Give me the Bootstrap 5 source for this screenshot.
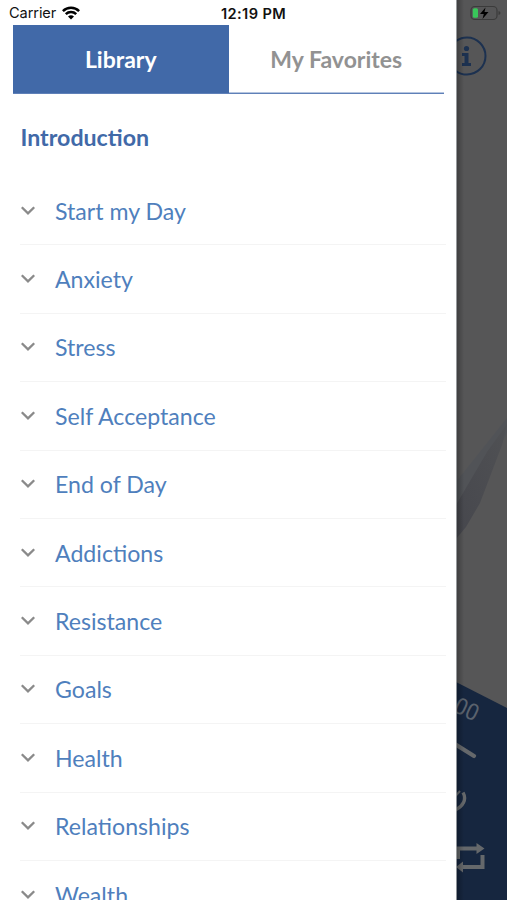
<!DOCTYPE html>
<html lang="en">
<head>
<meta charset="utf-8">
<meta name="viewport" content="width=device-width, initial-scale=1">
<title>Library</title>
<link href="https://cdn.jsdelivr.net/npm/bootstrap@5.3.0/dist/css/bootstrap.min.css" rel="stylesheet">
<style>
body{font-family:Lato,"Liberation Sans",sans-serif;}
.screen{width:507px;height:900px;}
.drawer{width:456px;}
.status{height:25px;font:500 15px/28px Inter,"Liberation Sans",sans-serif;color:#111;padding-left:9px;}
.carrier{width:212px;gap:6px;font-weight:400;font-size:14.6px;letter-spacing:-.1px;padding-top:1px}
.clock{font-weight:600;font-size:14.6px;letter-spacing:.4px}
.tabs{margin:0 12px 0 13px;height:69px;border-bottom:1px solid #5f80b8;box-shadow:inset 0 -1px #b5c5df;}
.tabs .nav-link{border-radius:0;font-size:23px;font-weight:700;line-height:68px;height:68px;padding:0;color:#929292;}
.tabs .nav-link.active{background:#4169a8;color:#fff;}
.intro{font-size:23.2px;font-weight:700;line-height:28px;color:#4169a8;margin:29px 0 0 20.5px;}
.topics{margin:26px 10px 0 20px;}
.topics .topic{height:68.4px;border:0;border-bottom:1.3px solid #f4f4f4;padding:0;color:#4f7fbd;font-size:23.15px;line-height:28px;background:none;border-radius:0}
.topic svg{margin:0 19px 0 0;}
</style>
<script src="https://cdn.jsdelivr.net/npm/bootstrap@5.3.0/dist/js/bootstrap.bundle.min.js"></script>
</head>
<body class="overflow-hidden bg-white">
<div class="screen d-flex overflow-hidden">
  <aside class="drawer flex-shrink-0 bg-white overflow-hidden">
    <div class="status d-flex">
      <div class="carrier d-flex align-items-center"><span>Carrier</span>
        <svg width="18" height="14" viewBox="0 0 18 14"><g fill="none" stroke="#000" stroke-width="2.5"><path d="M.9 5.1a11.5 11.5 0 0 1 16.2 0"/><path d="M3.8 8.2a7.4 7.4 0 0 1 10.4 0"/></g><path d="M6 10.6a4.3 4.3 0 0 1 6 0L9 13.6z"/></svg>
      </div>
      <div class="clock">12:19 PM</div>
    </div>
    <nav class="tabs nav nav-pills nav-justified flex-nowrap">
      <a class="nav-link active w-50" href="#">Library</a>
      <a class="nav-link w-50" href="#">My Favorites</a>
    </nav>
    <h1 class="intro">Introduction</h1>
    <div class="topics list-group list-group-flush">
      <a href="#" class="topic list-group-item d-flex align-items-center flex-shrink-0"><svg width="16" height="12" viewBox="0 0 16 12"><path d="M1.8 2.2 8 8.4l6.2-6.2" fill="none" stroke="#8a8a8a" stroke-width="2.3"/></svg>Start my Day</a>
      <a href="#" class="topic list-group-item d-flex align-items-center flex-shrink-0"><svg width="16" height="12" viewBox="0 0 16 12"><path d="M1.8 2.2 8 8.4l6.2-6.2" fill="none" stroke="#8a8a8a" stroke-width="2.3"/></svg>Anxiety</a>
      <a href="#" class="topic list-group-item d-flex align-items-center flex-shrink-0"><svg width="16" height="12" viewBox="0 0 16 12"><path d="M1.8 2.2 8 8.4l6.2-6.2" fill="none" stroke="#8a8a8a" stroke-width="2.3"/></svg>Stress</a>
      <a href="#" class="topic list-group-item d-flex align-items-center flex-shrink-0"><svg width="16" height="12" viewBox="0 0 16 12"><path d="M1.8 2.2 8 8.4l6.2-6.2" fill="none" stroke="#8a8a8a" stroke-width="2.3"/></svg>Self Acceptance</a>
      <a href="#" class="topic list-group-item d-flex align-items-center flex-shrink-0"><svg width="16" height="12" viewBox="0 0 16 12"><path d="M1.8 2.2 8 8.4l6.2-6.2" fill="none" stroke="#8a8a8a" stroke-width="2.3"/></svg>End of Day</a>
      <a href="#" class="topic list-group-item d-flex align-items-center flex-shrink-0"><svg width="16" height="12" viewBox="0 0 16 12"><path d="M1.8 2.2 8 8.4l6.2-6.2" fill="none" stroke="#8a8a8a" stroke-width="2.3"/></svg>Addictions</a>
      <a href="#" class="topic list-group-item d-flex align-items-center flex-shrink-0"><svg width="16" height="12" viewBox="0 0 16 12"><path d="M1.8 2.2 8 8.4l6.2-6.2" fill="none" stroke="#8a8a8a" stroke-width="2.3"/></svg>Resistance</a>
      <a href="#" class="topic list-group-item d-flex align-items-center flex-shrink-0"><svg width="16" height="12" viewBox="0 0 16 12"><path d="M1.8 2.2 8 8.4l6.2-6.2" fill="none" stroke="#8a8a8a" stroke-width="2.3"/></svg>Goals</a>
      <a href="#" class="topic list-group-item d-flex align-items-center flex-shrink-0"><svg width="16" height="12" viewBox="0 0 16 12"><path d="M1.8 2.2 8 8.4l6.2-6.2" fill="none" stroke="#8a8a8a" stroke-width="2.3"/></svg>Health</a>
      <a href="#" class="topic list-group-item d-flex align-items-center flex-shrink-0"><svg width="16" height="12" viewBox="0 0 16 12"><path d="M1.8 2.2 8 8.4l6.2-6.2" fill="none" stroke="#8a8a8a" stroke-width="2.3"/></svg>Relationships</a>
      <a href="#" class="topic list-group-item d-flex align-items-center flex-shrink-0"><svg width="16" height="12" viewBox="0 0 16 12"><path d="M1.8 2.2 8 8.4l6.2-6.2" fill="none" stroke="#8a8a8a" stroke-width="2.3"/></svg>Wealth</a>
    </div>
  </aside>
  <!-- dimmed player screen behind the drawer -->
  <svg class="flex-shrink-0" width="51" height="900" viewBox="456 0 51 900">
    <defs>
      <linearGradient id="edge"><stop offset="0" stop-color="#000" stop-opacity=".3"/><stop offset="1" stop-color="#000" stop-opacity="0"/></linearGradient>
      <linearGradient id="wing" x1="1" y1="0" x2="0" y2="1"><stop offset="0" stop-color="#505154"/><stop offset="1" stop-color="#46474d"/></linearGradient>
    </defs>
    <path fill="#565657" d="M456 0h51v900h-51z"/>
    <path fill="#515357" d="M507 418 456 482v56l10-14 41-92z"/>
    <path fill="url(#wing)" d="M507 424 487 452 456 505v34l10-12 14-24 22-58z"/>
    <path fill="#16263f" d="M456 682 507 708v192h-51z"/>
    <circle cx="467" cy="56" r="18.5" fill="none" stroke="#1c3150" stroke-width="2"/>
    <g fill="#1c3150"><circle cx="466.500" cy="48.500" r="2.600"/><path d="M462 53h6.500v10h2.500v3h-9v-3h2.500v-7H462z"/></g>
    <rect x="471" y="6.500" width="26" height="13" rx="3.800" fill="none" stroke="#3b3b3b" stroke-width="1.200"/>
    <path d="M498.500 11v4q2-.5 2-2t-2-2z" fill="#3b3b3b"/>
    <rect x="472.800" y="8.300" width="5.200" height="9.500" rx="1.500" fill="#39c75a"/>
    <path d="M485.500 7.500 480 14h3.800l-1.300 5 6-7h-4z" fill="#000"/>
    <text transform="translate(441 706) rotate(25)" font-family="Roboto,sans-serif" font-size="23" textLength="37" lengthAdjust="spacingAndGlyphs" fill="#5a626d">100</text>
    <g fill="none" stroke="#65686b">
      <path d="M450 741 474 756" stroke-width="4.200" stroke-linecap="round"/>
      <path d="M463 792.500c4 7 0 14-8 17.500" stroke-width="3.400"/><path d="M455 796.500 460 791" stroke-width="2"/>
      <path d="M458 859V848.500H479M482.500 855v12H462" stroke-width="4"/>
    </g>
    <path fill="#65686b" d="m476.500 843 8 5.500-8 5.500zM463 861.500l-7 5.500 7 5.500z"/>
    <path fill="url(#edge)" d="M456 0h8v900h-8z"/>
    <path fill="#aeb2b4" d="M456 0h.8v900h-.8z"/>
  </svg>
</div>
</body>
</html>
